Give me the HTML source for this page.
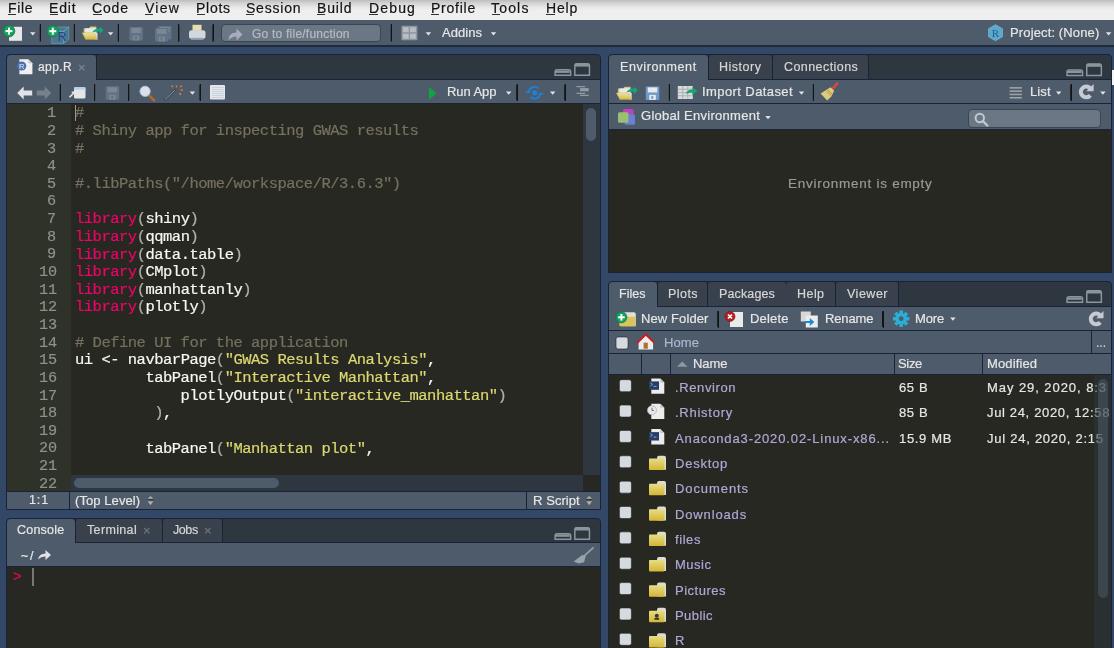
<!DOCTYPE html>
<html><head><meta charset="utf-8"><style>
html,body{margin:0;padding:0;}
body{-webkit-font-smoothing:antialiased;width:1114px;height:648px;overflow:hidden;position:relative;background:#324866;font-family:"Liberation Sans",sans-serif;}
.b{position:absolute;}
.t{position:absolute;white-space:pre;will-change:transform;-webkit-text-stroke:0.2px currentColor;}
.code{font-family:"Liberation Mono",monospace;font-size:15.5px;line-height:15.5px;letter-spacing:-0.5px;}
</style></head><body>
<div class="b" style="left:0px;top:0px;width:1114px;height:20px;background:linear-gradient(#bdbdbd 0px,#d2d2d2 3px,#e6e6e6 7px,#eeeeee 10px,#efefef 20px);"></div>
<div class="t" style="left:7.60px;top:0.75px;font-size:14px;line-height:14px;color:#141414;letter-spacing:0.661px;font-family:'Liberation Sans',sans-serif;">File</div>
<div class="b" style="left:8px;top:14px;width:8px;height:1px;background:#333;"></div>
<div class="t" style="left:49.30px;top:0.75px;font-size:14px;line-height:14px;color:#141414;letter-spacing:0.819px;font-family:'Liberation Sans',sans-serif;">Edit</div>
<div class="b" style="left:50px;top:14px;width:8px;height:1px;background:#333;"></div>
<div class="t" style="left:92.40px;top:0.75px;font-size:14px;line-height:14px;color:#141414;letter-spacing:0.833px;font-family:'Liberation Sans',sans-serif;">Code</div>
<div class="b" style="left:93px;top:14px;width:9px;height:1px;background:#333;"></div>
<div class="t" style="left:144.90px;top:0.75px;font-size:14px;line-height:14px;color:#141414;letter-spacing:1.277px;font-family:'Liberation Sans',sans-serif;">View</div>
<div class="b" style="left:145px;top:14px;width:8px;height:1px;background:#333;"></div>
<div class="t" style="left:196.10px;top:0.75px;font-size:14px;line-height:14px;color:#141414;letter-spacing:0.715px;font-family:'Liberation Sans',sans-serif;">Plots</div>
<div class="b" style="left:197px;top:14px;width:8px;height:1px;background:#333;"></div>
<div class="t" style="left:245.90px;top:0.75px;font-size:14px;line-height:14px;color:#141414;letter-spacing:0.785px;font-family:'Liberation Sans',sans-serif;">Session</div>
<div class="b" style="left:246px;top:14px;width:8px;height:1px;background:#333;"></div>
<div class="t" style="left:316.90px;top:0.75px;font-size:14px;line-height:14px;color:#141414;letter-spacing:0.854px;font-family:'Liberation Sans',sans-serif;">Build</div>
<div class="b" style="left:317px;top:14px;width:8px;height:1px;background:#333;"></div>
<div class="t" style="left:368.50px;top:0.75px;font-size:14px;line-height:14px;color:#141414;letter-spacing:1.150px;font-family:'Liberation Sans',sans-serif;">Debug</div>
<div class="b" style="left:369px;top:14px;width:9px;height:1px;background:#333;"></div>
<div class="t" style="left:430.90px;top:0.75px;font-size:14px;line-height:14px;color:#141414;letter-spacing:0.760px;font-family:'Liberation Sans',sans-serif;">Profile</div>
<div class="b" style="left:431px;top:14px;width:8px;height:1px;background:#333;"></div>
<div class="t" style="left:491.30px;top:0.75px;font-size:14px;line-height:14px;color:#141414;letter-spacing:1.184px;font-family:'Liberation Sans',sans-serif;">Tools</div>
<div class="b" style="left:492px;top:14px;width:8px;height:1px;background:#333;"></div>
<div class="t" style="left:545.90px;top:0.75px;font-size:14px;line-height:14px;color:#141414;letter-spacing:0.802px;font-family:'Liberation Sans',sans-serif;">Help</div>
<div class="b" style="left:546px;top:14px;width:9px;height:1px;background:#333;"></div>
<div class="b" style="left:0px;top:20px;width:1114px;height:25px;background:#4e5b6a;"></div>
<div class="b" style="left:0px;top:45px;width:1114px;height:2px;background:#1f2b3b;"></div>
<div class="b" style="left:40px;top:24px;width:1px;height:17px;background:#151515;"></div>
<div class="b" style="left:74px;top:24px;width:1px;height:17px;background:#151515;"></div>
<div class="b" style="left:118px;top:24px;width:1px;height:17px;background:#151515;"></div>
<div class="b" style="left:178px;top:24px;width:1px;height:17px;background:#151515;"></div>
<div class="b" style="left:213px;top:24px;width:1px;height:17px;background:#151515;"></div>
<div class="b" style="left:391px;top:24px;width:1px;height:17px;background:#151515;"></div>
<div class="b" style="left:221px;top:24px;width:160px;height:18px;background:#6b7785;border:1px solid #3a4552;border-radius:4px;box-sizing:border-box;"></div>
<div class="t" style="left:252.30px;top:28.24px;font-size:12px;line-height:12px;color:#b4bcc4;letter-spacing:0.227px;font-family:'Liberation Sans',sans-serif;">Go to file/function</div>
<div class="t" style="left:441.80px;top:26.00px;font-size:13px;line-height:13px;color:#e6e6e6;letter-spacing:0.075px;font-family:'Liberation Sans',sans-serif;">Addins</div>
<div class="t" style="left:1009.60px;top:26.00px;font-size:13px;line-height:13px;color:#e6e6e6;letter-spacing:0.132px;font-family:'Liberation Sans',sans-serif;">Project: (None)</div>
<div class="b" style="left:6px;top:54px;width:595px;height:456px;background:#2e3640;border:1px solid #18233a;border-radius:4px 4px 0 0;box-sizing:border-box;"></div>
<div class="b" style="left:7px;top:55px;width:89px;height:25px;background:#4e5b6a;border-radius:4px 4px 0 0;"></div>
<div class="b" style="left:96px;top:55px;width:1px;height:25px;background:#18233a;"></div>
<div class="b" style="left:97px;top:79px;width:503px;height:1px;background:#18233a;"></div>
<div class="t" style="left:38.30px;top:61.04px;font-size:12px;line-height:12px;color:#e8e8e8;letter-spacing:0.396px;font-family:'Liberation Sans',sans-serif;">app.R</div>
<div class="t" style="left:77.60px;top:60.50px;font-size:13px;line-height:13px;color:#7d8791;letter-spacing:0.000px;font-family:'Liberation Sans',sans-serif;">×</div>
<div class="b" style="left:7px;top:80px;width:593px;height:23px;background:#4e5b6a;"></div>
<div class="b" style="left:7px;top:103px;width:593px;height:1px;background:#18233a;"></div>
<div class="b" style="left:60px;top:84px;width:1px;height:17px;background:#151515;"></div>
<div class="b" style="left:94px;top:84px;width:1px;height:17px;background:#151515;"></div>
<div class="b" style="left:128px;top:84px;width:1px;height:17px;background:#151515;"></div>
<div class="b" style="left:200px;top:84px;width:1px;height:17px;background:#151515;"></div>
<div class="b" style="left:517px;top:84px;width:1px;height:17px;background:#151515;"></div>
<div class="b" style="left:565px;top:84px;width:1px;height:17px;background:#151515;"></div>
<div class="t" style="left:446.80px;top:85.20px;font-size:13px;line-height:13px;color:#e6e6e6;letter-spacing:-0.067px;font-family:'Liberation Sans',sans-serif;">Run App</div>
<div class="b" style="left:7px;top:104px;width:64px;height:387px;background:#2e3229;"></div>
<div class="b" style="left:71px;top:104px;width:512px;height:371px;background:#272822;"></div>
<div class="b" style="left:583px;top:104px;width:17px;height:371px;background:#2e3640;"></div>
<div class="b" style="left:586px;top:108px;width:10px;height:33px;background:#4e5b6a;border-radius:5px;"></div>
<div class="b" style="left:71px;top:475px;width:512px;height:16px;background:#2e3640;"></div>
<div class="b" style="left:74px;top:478px;width:205px;height:10px;background:#4e5b6a;border-radius:5px;"></div>
<div class="b" style="left:583px;top:475px;width:17px;height:16px;background:#272822;"></div>
<div class="b" style="left:7px;top:491px;width:593px;height:18px;background:#4e5b6a;"></div>
<div class="b" style="left:7px;top:491px;width:593px;height:1px;background:#18233a;"></div>
<div class="b" style="left:69px;top:491px;width:1px;height:18px;background:#18233a;"></div>
<div class="b" style="left:526px;top:491px;width:1px;height:18px;background:#18233a;"></div>
<div class="t" style="left:28.50px;top:494.42px;font-size:12.5px;line-height:12.5px;color:#e6e6e6;letter-spacing:0.875px;font-family:'Liberation Sans',sans-serif;">1:1</div>
<div class="t" style="left:75.00px;top:494.00px;font-size:13px;line-height:13px;color:#e6e6e6;letter-spacing:0.082px;font-family:'Liberation Sans',sans-serif;">(Top Level)</div>
<div class="t" style="left:533.00px;top:494.00px;font-size:13px;line-height:13px;color:#e6e6e6;letter-spacing:0.071px;font-family:'Liberation Sans',sans-serif;">R Script</div>
<div class="t" style="left:47.40px;top:106.26px;font-size:15.2px;line-height:15.2px;color:#8f908a;letter-spacing:0.000px;font-family:'Liberation Mono',monospace;">1</div>
<div class="t code" style="left:75.3px;top:106.43px;"><span style="color:#75715e">#</span></div>
<div class="t" style="left:47.40px;top:123.90px;font-size:15.2px;line-height:15.2px;color:#8f908a;letter-spacing:0.000px;font-family:'Liberation Mono',monospace;">2</div>
<div class="t code" style="left:75.3px;top:124.07px;"><span style="color:#75715e"># Shiny app for inspecting GWAS results</span></div>
<div class="t" style="left:47.40px;top:141.54px;font-size:15.2px;line-height:15.2px;color:#8f908a;letter-spacing:0.000px;font-family:'Liberation Mono',monospace;">3</div>
<div class="t code" style="left:75.3px;top:141.71px;"><span style="color:#75715e">#</span></div>
<div class="t" style="left:47.40px;top:159.18px;font-size:15.2px;line-height:15.2px;color:#8f908a;letter-spacing:0.000px;font-family:'Liberation Mono',monospace;">4</div>
<div class="t" style="left:47.40px;top:176.82px;font-size:15.2px;line-height:15.2px;color:#8f908a;letter-spacing:0.000px;font-family:'Liberation Mono',monospace;">5</div>
<div class="t code" style="left:75.3px;top:176.99px;"><span style="color:#75715e">#.libPaths("/home/workspace/R/3.6.3")</span></div>
<div class="t" style="left:47.40px;top:194.46px;font-size:15.2px;line-height:15.2px;color:#8f908a;letter-spacing:0.000px;font-family:'Liberation Mono',monospace;">6</div>
<div class="t" style="left:47.40px;top:212.10px;font-size:15.2px;line-height:15.2px;color:#8f908a;letter-spacing:0.000px;font-family:'Liberation Mono',monospace;">7</div>
<div class="t code" style="left:75.3px;top:212.27px;"><span style="color:#ee0468">library</span><span style="color:#b0b0a8">(</span><span style="color:#f8f8f2">shiny</span><span style="color:#b0b0a8">)</span></div>
<div class="t" style="left:47.40px;top:229.74px;font-size:15.2px;line-height:15.2px;color:#8f908a;letter-spacing:0.000px;font-family:'Liberation Mono',monospace;">8</div>
<div class="t code" style="left:75.3px;top:229.91px;"><span style="color:#ee0468">library</span><span style="color:#b0b0a8">(</span><span style="color:#f8f8f2">qqman</span><span style="color:#b0b0a8">)</span></div>
<div class="t" style="left:47.40px;top:247.38px;font-size:15.2px;line-height:15.2px;color:#8f908a;letter-spacing:0.000px;font-family:'Liberation Mono',monospace;">9</div>
<div class="t code" style="left:75.3px;top:247.55px;"><span style="color:#ee0468">library</span><span style="color:#b0b0a8">(</span><span style="color:#f8f8f2">data.table</span><span style="color:#b0b0a8">)</span></div>
<div class="t" style="left:38.60px;top:265.02px;font-size:15.2px;line-height:15.2px;color:#8f908a;letter-spacing:0.000px;font-family:'Liberation Mono',monospace;">10</div>
<div class="t code" style="left:75.3px;top:265.19px;"><span style="color:#ee0468">library</span><span style="color:#b0b0a8">(</span><span style="color:#f8f8f2">CMplot</span><span style="color:#b0b0a8">)</span></div>
<div class="t" style="left:38.60px;top:282.66px;font-size:15.2px;line-height:15.2px;color:#8f908a;letter-spacing:0.000px;font-family:'Liberation Mono',monospace;">11</div>
<div class="t code" style="left:75.3px;top:282.83px;"><span style="color:#ee0468">library</span><span style="color:#b0b0a8">(</span><span style="color:#f8f8f2">manhattanly</span><span style="color:#b0b0a8">)</span></div>
<div class="t" style="left:38.60px;top:300.30px;font-size:15.2px;line-height:15.2px;color:#8f908a;letter-spacing:0.000px;font-family:'Liberation Mono',monospace;">12</div>
<div class="t code" style="left:75.3px;top:300.47px;"><span style="color:#ee0468">library</span><span style="color:#b0b0a8">(</span><span style="color:#f8f8f2">plotly</span><span style="color:#b0b0a8">)</span></div>
<div class="t" style="left:38.60px;top:317.94px;font-size:15.2px;line-height:15.2px;color:#8f908a;letter-spacing:0.000px;font-family:'Liberation Mono',monospace;">13</div>
<div class="t" style="left:38.60px;top:335.58px;font-size:15.2px;line-height:15.2px;color:#8f908a;letter-spacing:0.000px;font-family:'Liberation Mono',monospace;">14</div>
<div class="t code" style="left:75.3px;top:335.75px;"><span style="color:#75715e"># Define UI for the application</span></div>
<div class="t" style="left:38.60px;top:353.22px;font-size:15.2px;line-height:15.2px;color:#8f908a;letter-spacing:0.000px;font-family:'Liberation Mono',monospace;">15</div>
<div class="t code" style="left:75.3px;top:353.39px;"><span style="color:#f8f8f2">ui </span><span style="color:#f8f8f2">&lt;-</span><span style="color:#f8f8f2"> navbarPage</span><span style="color:#b0b0a8">(</span><span style="color:#dcd870">"GWAS Results Analysis"</span><span style="color:#f8f8f2">,</span></div>
<div class="t" style="left:38.60px;top:370.86px;font-size:15.2px;line-height:15.2px;color:#8f908a;letter-spacing:0.000px;font-family:'Liberation Mono',monospace;">16</div>
<div class="t code" style="left:75.3px;top:371.03px;"><span style="color:#f8f8f2">        tabPanel</span><span style="color:#b0b0a8">(</span><span style="color:#dcd870">"Interactive Manhattan"</span><span style="color:#f8f8f2">,</span></div>
<div class="t" style="left:38.60px;top:388.50px;font-size:15.2px;line-height:15.2px;color:#8f908a;letter-spacing:0.000px;font-family:'Liberation Mono',monospace;">17</div>
<div class="t code" style="left:75.3px;top:388.67px;"><span style="color:#f8f8f2">            plotlyOutput</span><span style="color:#b0b0a8">(</span><span style="color:#dcd870">"interactive_manhattan"</span><span style="color:#b0b0a8">)</span></div>
<div class="t" style="left:38.60px;top:406.14px;font-size:15.2px;line-height:15.2px;color:#8f908a;letter-spacing:0.000px;font-family:'Liberation Mono',monospace;">18</div>
<div class="t code" style="left:75.3px;top:406.31px;"><span style="color:#f8f8f2">         </span><span style="color:#b0b0a8">)</span><span style="color:#f8f8f2">,</span></div>
<div class="t" style="left:38.60px;top:423.78px;font-size:15.2px;line-height:15.2px;color:#8f908a;letter-spacing:0.000px;font-family:'Liberation Mono',monospace;">19</div>
<div class="t" style="left:38.60px;top:441.42px;font-size:15.2px;line-height:15.2px;color:#8f908a;letter-spacing:0.000px;font-family:'Liberation Mono',monospace;">20</div>
<div class="t code" style="left:75.3px;top:441.59px;"><span style="color:#f8f8f2">        tabPanel</span><span style="color:#b0b0a8">(</span><span style="color:#dcd870">"Manhattan plot"</span><span style="color:#f8f8f2">,</span></div>
<div class="t" style="left:38.60px;top:459.06px;font-size:15.2px;line-height:15.2px;color:#8f908a;letter-spacing:0.000px;font-family:'Liberation Mono',monospace;">21</div>
<div class="t" style="left:38.60px;top:476.70px;font-size:15.2px;line-height:15.2px;color:#8f908a;letter-spacing:0.000px;font-family:'Liberation Mono',monospace;">22</div>
<div class="b" style="left:75px;top:105px;width:1px;height:16px;background:#9a9a90;"></div>
<div class="b" style="left:6px;top:518px;width:595px;height:130px;background:#2e3640;border:1px solid #18233a;border-radius:4px 4px 0 0;box-sizing:border-box;"></div>
<div class="b" style="left:7px;top:519px;width:68px;height:24px;background:#4e5b6a;border-radius:4px 4px 0 0;"></div>
<div class="b" style="left:75px;top:519px;width:1px;height:24px;background:#18233a;"></div>
<div class="b" style="left:76px;top:519px;width:86px;height:24px;background:#38414c;border-radius:4px 4px 0 0;"></div>
<div class="b" style="left:162px;top:519px;width:1px;height:24px;background:#18233a;"></div>
<div class="b" style="left:163px;top:519px;width:59px;height:24px;background:#38414c;border-radius:4px 4px 0 0;"></div>
<div class="b" style="left:222px;top:519px;width:1px;height:24px;background:#18233a;"></div>
<div class="b" style="left:76px;top:542px;width:524px;height:1px;background:#18233a;"></div>
<div class="t" style="left:17.00px;top:524.22px;font-size:12.5px;line-height:12.5px;color:#e6e6e6;letter-spacing:0.206px;font-family:'Liberation Sans',sans-serif;">Console</div>
<div class="t" style="left:86.70px;top:524.22px;font-size:12.5px;line-height:12.5px;color:#d6d6d6;letter-spacing:0.346px;font-family:'Liberation Sans',sans-serif;">Terminal</div>
<div class="t" style="left:143.20px;top:523.50px;font-size:13px;line-height:13px;color:#6f7882;letter-spacing:0.000px;font-family:'Liberation Sans',sans-serif;">×</div>
<div class="t" style="left:172.60px;top:524.22px;font-size:12.5px;line-height:12.5px;color:#d6d6d6;letter-spacing:-0.426px;font-family:'Liberation Sans',sans-serif;">Jobs</div>
<div class="t" style="left:203.80px;top:523.50px;font-size:13px;line-height:13px;color:#6f7882;letter-spacing:0.000px;font-family:'Liberation Sans',sans-serif;">×</div>
<div class="b" style="left:7px;top:543px;width:593px;height:23px;background:#4e5b6a;"></div>
<div class="b" style="left:7px;top:566px;width:593px;height:1px;background:#18233a;"></div>
<div class="t" style="left:20.80px;top:550.22px;font-size:12.5px;line-height:12.5px;color:#e6e6e6;letter-spacing:1.613px;font-family:'Liberation Sans',sans-serif;">~/</div>
<div class="b" style="left:7px;top:567px;width:593px;height:81px;background:#272822;"></div>
<div class="t" style="left:12.80px;top:569.76px;font-size:14.67px;line-height:14.67px;color:#ee0468;letter-spacing:0.000px;font-family:'Liberation Mono',monospace;">&gt;</div>
<div class="b" style="left:32px;top:568px;width:2px;height:18px;background:#77786f;"></div>
<div class="b" style="left:608px;top:54px;width:504px;height:219px;background:#2e3640;border:1px solid #18233a;border-radius:4px 4px 0 0;box-sizing:border-box;"></div>
<div class="b" style="left:609px;top:55px;width:99px;height:25px;background:#4e5b6a;border-radius:4px 4px 0 0;"></div>
<div class="b" style="left:708px;top:55px;width:1px;height:25px;background:#18233a;"></div>
<div class="b" style="left:709px;top:55px;width:63px;height:25px;background:#38414c;border-radius:4px 4px 0 0;"></div>
<div class="b" style="left:772px;top:55px;width:1px;height:25px;background:#18233a;"></div>
<div class="b" style="left:773px;top:55px;width:95px;height:25px;background:#38414c;border-radius:4px 4px 0 0;"></div>
<div class="b" style="left:868px;top:55px;width:1px;height:25px;background:#18233a;"></div>
<div class="b" style="left:709px;top:79px;width:402px;height:1px;background:#18233a;"></div>
<div class="t" style="left:620.10px;top:60.92px;font-size:12.5px;line-height:12.5px;color:#e6e6e6;letter-spacing:0.594px;font-family:'Liberation Sans',sans-serif;">Environment</div>
<div class="t" style="left:718.50px;top:60.92px;font-size:12.5px;line-height:12.5px;color:#d6d6d6;letter-spacing:0.516px;font-family:'Liberation Sans',sans-serif;">History</div>
<div class="t" style="left:783.70px;top:60.92px;font-size:12.5px;line-height:12.5px;color:#d6d6d6;letter-spacing:0.429px;font-family:'Liberation Sans',sans-serif;">Connections</div>
<div class="b" style="left:609px;top:80px;width:502px;height:23px;background:#4e5b6a;"></div>
<div class="b" style="left:609px;top:103px;width:502px;height:1px;background:#18233a;"></div>
<div class="b" style="left:669px;top:84px;width:1px;height:17px;background:#151515;"></div>
<div class="b" style="left:813px;top:84px;width:1px;height:17px;background:#151515;"></div>
<div class="b" style="left:1071px;top:84px;width:1px;height:17px;background:#151515;"></div>
<div class="t" style="left:702.00px;top:85.00px;font-size:13px;line-height:13px;color:#e6e6e6;letter-spacing:0.411px;font-family:'Liberation Sans',sans-serif;">Import Dataset</div>
<div class="t" style="left:1029.50px;top:85.40px;font-size:13px;line-height:13px;color:#e6e6e6;letter-spacing:0.093px;font-family:'Liberation Sans',sans-serif;">List</div>
<div class="b" style="left:609px;top:104px;width:502px;height:25px;background:#4e5b6a;"></div>
<div class="b" style="left:609px;top:129px;width:502px;height:1px;background:#18233a;"></div>
<div class="t" style="left:641.00px;top:109.10px;font-size:13px;line-height:13px;color:#e6e6e6;letter-spacing:0.269px;font-family:'Liberation Sans',sans-serif;">Global Environment</div>
<div class="b" style="left:968px;top:109px;width:133px;height:19px;background:#6b7785;border:1px solid #3a4552;border-radius:4px;box-sizing:border-box;"></div>
<div class="b" style="left:609px;top:130px;width:502px;height:142px;background:#272822;"></div>
<div class="t" style="left:787.80px;top:177.17px;font-size:13.5px;line-height:13.5px;color:#9a9a94;letter-spacing:0.740px;font-family:'Liberation Sans',sans-serif;">Environment is empty</div>
<div class="b" style="left:1112px;top:70px;width:2px;height:15px;background:#f4f4f4;"></div>
<div class="b" style="left:608px;top:281px;width:504px;height:367px;background:#2e3640;border:1px solid #18233a;border-radius:4px 4px 0 0;box-sizing:border-box;"></div>
<div class="b" style="left:609px;top:282px;width:48px;height:25px;background:#4e5b6a;border-radius:4px 4px 0 0;"></div>
<div class="b" style="left:657px;top:282px;width:1px;height:25px;background:#18233a;"></div>
<div class="b" style="left:658px;top:282px;width:49px;height:25px;background:#38414c;border-radius:4px 4px 0 0;"></div>
<div class="b" style="left:707px;top:282px;width:1px;height:25px;background:#18233a;"></div>
<div class="b" style="left:708px;top:282px;width:78px;height:25px;background:#38414c;border-radius:4px 4px 0 0;"></div>
<div class="b" style="left:786px;top:282px;width:1px;height:25px;background:#18233a;"></div>
<div class="b" style="left:786px;top:282px;width:49px;height:25px;background:#38414c;border-radius:4px 4px 0 0;"></div>
<div class="b" style="left:835px;top:282px;width:1px;height:25px;background:#18233a;"></div>
<div class="b" style="left:836px;top:282px;width:62px;height:25px;background:#38414c;border-radius:4px 4px 0 0;"></div>
<div class="b" style="left:898px;top:282px;width:1px;height:25px;background:#18233a;"></div>
<div class="b" style="left:658px;top:306px;width:453px;height:1px;background:#18233a;"></div>
<div class="t" style="left:619.40px;top:287.72px;font-size:12.5px;line-height:12.5px;color:#e6e6e6;letter-spacing:0.042px;font-family:'Liberation Sans',sans-serif;">Files</div>
<div class="t" style="left:668.00px;top:287.72px;font-size:12.5px;line-height:12.5px;color:#d6d6d6;letter-spacing:0.442px;font-family:'Liberation Sans',sans-serif;">Plots</div>
<div class="t" style="left:719.00px;top:287.72px;font-size:12.5px;line-height:12.5px;color:#d6d6d6;letter-spacing:0.138px;font-family:'Liberation Sans',sans-serif;">Packages</div>
<div class="t" style="left:797.00px;top:287.72px;font-size:12.5px;line-height:12.5px;color:#d6d6d6;letter-spacing:0.448px;font-family:'Liberation Sans',sans-serif;">Help</div>
<div class="t" style="left:846.50px;top:287.72px;font-size:12.5px;line-height:12.5px;color:#d6d6d6;letter-spacing:0.503px;font-family:'Liberation Sans',sans-serif;">Viewer</div>
<div class="b" style="left:609px;top:307px;width:502px;height:23px;background:#4e5b6a;"></div>
<div class="b" style="left:609px;top:330px;width:502px;height:1px;background:#18233a;"></div>
<div class="b" style="left:718px;top:311px;width:1px;height:17px;background:#151515;"></div>
<div class="b" style="left:883px;top:311px;width:1px;height:17px;background:#151515;"></div>
<div class="t" style="left:641.00px;top:311.90px;font-size:13px;line-height:13px;color:#e6e6e6;letter-spacing:0.104px;font-family:'Liberation Sans',sans-serif;">New Folder</div>
<div class="t" style="left:750.30px;top:311.90px;font-size:13px;line-height:13px;color:#e6e6e6;letter-spacing:0.187px;font-family:'Liberation Sans',sans-serif;">Delete</div>
<div class="t" style="left:824.50px;top:311.90px;font-size:13px;line-height:13px;color:#e6e6e6;letter-spacing:-0.156px;font-family:'Liberation Sans',sans-serif;">Rename</div>
<div class="t" style="left:915.40px;top:311.90px;font-size:13px;line-height:13px;color:#e6e6e6;letter-spacing:-0.154px;font-family:'Liberation Sans',sans-serif;">More</div>
<div class="b" style="left:609px;top:331px;width:502px;height:23px;background:#4e5b6a;"></div>
<div class="b" style="left:1091px;top:331px;width:1px;height:23px;background:#18233a;"></div>
<div class="b" style="left:609px;top:353px;width:502px;height:1px;background:#18233a;"></div>
<div class="t" style="left:664.00px;top:335.80px;font-size:13px;line-height:13px;color:#a9b9d1;letter-spacing:0.106px;font-family:'Liberation Sans',sans-serif;">Home</div>
<div class="t" style="left:1096.00px;top:336.84px;font-size:12px;line-height:12px;color:#d0d0d0;letter-spacing:0.000px;font-family:'Liberation Sans',sans-serif;">...</div>
<div class="b" style="left:609px;top:354px;width:502px;height:21px;background:#4e5b6a;"></div>
<div class="b" style="left:609px;top:374px;width:502px;height:1px;background:#18233a;"></div>
<div class="b" style="left:641px;top:354px;width:1px;height:20px;background:#18233a;"></div>
<div class="b" style="left:670px;top:354px;width:1px;height:20px;background:#18233a;"></div>
<div class="b" style="left:894px;top:354px;width:1px;height:20px;background:#18233a;"></div>
<div class="b" style="left:982px;top:354px;width:1px;height:20px;background:#18233a;"></div>
<div class="t" style="left:692.70px;top:356.80px;font-size:13px;line-height:13px;color:#e6e6e6;letter-spacing:-0.044px;font-family:'Liberation Sans',sans-serif;">Name</div>
<div class="t" style="left:898.30px;top:356.80px;font-size:13px;line-height:13px;color:#e6e6e6;letter-spacing:-0.322px;font-family:'Liberation Sans',sans-serif;">Size</div>
<div class="t" style="left:986.50px;top:356.80px;font-size:13px;line-height:13px;color:#e6e6e6;letter-spacing:0.133px;font-family:'Liberation Sans',sans-serif;">Modified</div>
<div class="b" style="left:609px;top:375px;width:502px;height:273px;background:#272822;"></div>
<div class="t" style="left:675.40px;top:380.80px;font-size:13px;line-height:13px;color:#b3a6d6;letter-spacing:0.607px;font-family:'Liberation Sans',sans-serif;">.Renviron</div>
<div class="t" style="left:899.20px;top:380.80px;font-size:13px;line-height:13px;color:#e6e6e6;letter-spacing:0.615px;font-family:'Liberation Sans',sans-serif;">65 B</div>
<div class="t" style="left:986.50px;top:380.80px;font-size:13px;line-height:13px;color:#e6e6e6;letter-spacing:0.938px;font-family:'Liberation Sans',sans-serif;">May 29, 2020, 8:3</div>
<div class="t" style="left:675.40px;top:406.16px;font-size:13px;line-height:13px;color:#b3a6d6;letter-spacing:0.746px;font-family:'Liberation Sans',sans-serif;">.Rhistory</div>
<div class="t" style="left:899.20px;top:406.16px;font-size:13px;line-height:13px;color:#e6e6e6;letter-spacing:0.615px;font-family:'Liberation Sans',sans-serif;">85 B</div>
<div class="t" style="left:986.50px;top:406.16px;font-size:13px;line-height:13px;color:#e6e6e6;letter-spacing:0.654px;font-family:'Liberation Sans',sans-serif;">Jul 24, 2020, 12:58</div>
<div class="t" style="left:675.40px;top:431.52px;font-size:13px;line-height:13px;color:#b3a6d6;letter-spacing:0.879px;font-family:'Liberation Sans',sans-serif;">Anaconda3-2020.02-Linux-x86...</div>
<div class="t" style="left:899.20px;top:431.52px;font-size:13px;line-height:13px;color:#e6e6e6;letter-spacing:0.670px;font-family:'Liberation Sans',sans-serif;">15.9 MB</div>
<div class="t" style="left:986.50px;top:431.52px;font-size:13px;line-height:13px;color:#e6e6e6;letter-spacing:0.747px;font-family:'Liberation Sans',sans-serif;">Jul 24, 2020, 2:15</div>
<div class="t" style="left:675.40px;top:456.88px;font-size:13px;line-height:13px;color:#b3a6d6;letter-spacing:0.759px;font-family:'Liberation Sans',sans-serif;">Desktop</div>
<div class="t" style="left:675.40px;top:482.24px;font-size:13px;line-height:13px;color:#b3a6d6;letter-spacing:0.917px;font-family:'Liberation Sans',sans-serif;">Documents</div>
<div class="t" style="left:675.40px;top:507.60px;font-size:13px;line-height:13px;color:#b3a6d6;letter-spacing:0.854px;font-family:'Liberation Sans',sans-serif;">Downloads</div>
<div class="t" style="left:675.40px;top:532.96px;font-size:13px;line-height:13px;color:#b3a6d6;letter-spacing:0.576px;font-family:'Liberation Sans',sans-serif;">files</div>
<div class="t" style="left:675.40px;top:558.32px;font-size:13px;line-height:13px;color:#b3a6d6;letter-spacing:0.511px;font-family:'Liberation Sans',sans-serif;">Music</div>
<div class="t" style="left:675.40px;top:583.68px;font-size:13px;line-height:13px;color:#b3a6d6;letter-spacing:0.505px;font-family:'Liberation Sans',sans-serif;">Pictures</div>
<div class="t" style="left:675.40px;top:609.04px;font-size:13px;line-height:13px;color:#b3a6d6;letter-spacing:0.432px;font-family:'Liberation Sans',sans-serif;">Public</div>
<div class="t" style="left:675.40px;top:634.40px;font-size:13px;line-height:13px;color:#b3a6d6;letter-spacing:-1.388px;font-family:'Liberation Sans',sans-serif;">R</div>
<div class="b" style="left:1094px;top:375px;width:17px;height:273px;background:rgba(46,54,64,0.55);"></div>
<div class="b" style="left:1097.5px;top:379px;width:10.5px;height:219px;background:rgba(78,91,106,0.5);border-radius:5px;"></div>
<svg class="b" style="left:0;top:0;pointer-events:none" width="1114" height="648" viewBox="0 0 1114 648"><defs><linearGradient id="fg" x1="0" y1="0" x2="0" y2="1"><stop offset="0" stop-color="#e6dc88"/><stop offset="1" stop-color="#d6b632"/></linearGradient><linearGradient id="ofg" x1="0" y1="0" x2="0" y2="1"><stop offset="0" stop-color="#ebe6a6"/><stop offset="1" stop-color="#d4b844"/></linearGradient></defs><rect x="9" y="26.8" width="13" height="14" fill="#e8e8e8"/><circle cx="9" cy="31.1" r="5.8" fill="#16a05e" stroke="#0d7c48" stroke-width="0.8"/><rect x="5.52" y="30.1" width="6.96" height="2" fill="#fff"/><rect x="8" y="27.62" width="2" height="6.96" fill="#fff"/><polygon points="30.0,32.3 35.5,32.3 32.75,35.5" fill="#dfe3e8"/><rect x="39.699999999999996" y="24.4" width="1.2" height="17.300000000000004" rx="0.6" fill="#141414"/><g transform="translate(51.8 27)"><polygon points="0,4.3 5,0 17,0 12,4.3" fill="rgba(80,165,195,0.38)" stroke="rgba(95,185,215,0.75)" stroke-width="0.7"/><polygon points="12,4.3 17,0 17,12 12,16.3" fill="rgba(70,150,180,0.45)" stroke="rgba(95,185,215,0.75)" stroke-width="0.7"/><rect x="0" y="4.3" width="12" height="12" fill="rgba(80,165,195,0.38)" stroke="rgba(95,185,215,0.75)" stroke-width="0.7"/><text x="6" y="13.5" font-family="Liberation Sans" font-size="12" fill="#27458f">R</text></g><circle cx="52.8" cy="31.2" r="5.8" fill="#16a05e" stroke="#0d7c48" stroke-width="0.8"/><rect x="49.32" y="30.2" width="6.96" height="2" fill="#fff"/><rect x="51.8" y="27.72" width="2" height="6.96" fill="#fff"/><rect x="73.80000000000001" y="24.4" width="1.2" height="17.300000000000004" rx="0.6" fill="#141414"/><g transform="translate(82.2 25.8)"><polygon points="1.7,2.8 7,2.8 8,1 14,1 14.5,6.9 1.7,6.9" fill="#d9d2a2" stroke="#bfae5c" stroke-width="0.5"/><rect x="3" y="2.4" width="10.5" height="5" fill="#e8e8e8"/><polygon points="11.6,6.9 15.3,6.9 15.3,13.6 13,13.6" fill="#dedede"/><polygon points="0,6.9 11.6,6.9 15.3,13.6 3.4,13.6" fill="url(#ofg)" stroke="#c8ae40" stroke-width="0.4"/><path d="M10.2 6.2 Q12 2.6 17.6 2.6 V0.8 L21.4 4.1 L17.6 7.9 V5.6 Q13 5.6 10.2 6.2 Z" fill="#12a87a"/></g><polygon points="107.85,32.3 113.35,32.3 110.6,35.5" fill="#dfe3e8"/><rect x="117.80000000000001" y="24.4" width="1.2" height="17.300000000000004" rx="0.6" fill="#141414"/><rect x="129.4" y="27" width="13.5" height="13.5" rx="1" fill="#5f7389"/><rect x="131.4" y="28" width="9.5" height="5" fill="#7d8791"/><rect x="132.9" y="35.5" width="6.5" height="5" fill="#7d8791"/><rect x="134.9" y="36.5" width="2" height="3" fill="#5f7389"/><rect x="158" y="26" width="13.5" height="13.5" rx="1" fill="#5f7389"/><rect x="160" y="27" width="9.5" height="5" fill="#7d8791"/><rect x="161.5" y="34.5" width="6.5" height="5" fill="#7d8791"/><rect x="163.5" y="35.5" width="2" height="3" fill="#5f7389"/><rect x="155" y="28" width="13.5" height="13.5" rx="1" fill="#5f7389"/><rect x="157" y="29" width="9.5" height="5" fill="#7d8791"/><rect x="158.5" y="36.5" width="6.5" height="5" fill="#7d8791"/><rect x="160.5" y="37.5" width="2" height="3" fill="#5f7389"/><rect x="178.20000000000002" y="24.4" width="1.2" height="17.300000000000004" rx="0.6" fill="#141414"/><rect x="192.5" y="24.8" width="9" height="6" fill="#e6ddb0"/><rect x="189" y="30.3" width="16.5" height="8.5" rx="2.5" fill="#d3d7de"/><rect x="191" y="37.8" width="12.5" height="2" fill="#9aa1ad"/><rect x="212.4" y="24.4" width="1.2" height="17.300000000000004" rx="0.6" fill="#141414"/><path d="M228.5 40.5 q0 -8 8 -8 v-4 l6 6 l-6 6 v-4 q-5 0 -8 4z" fill="#a9abc2"/><rect x="390.7" y="24.4" width="1.2" height="17.300000000000004" rx="0.6" fill="#141414"/><rect x="401.4" y="25.7" width="16" height="14.5" fill="#8d959e" rx="1"/><rect x="402.9" y="27.2" width="5.8" height="5" fill="#b7bdc4"/><rect x="402.9" y="33.7" width="5.8" height="5" fill="#b7bdc4"/><rect x="410.09999999999997" y="27.2" width="5.8" height="5" fill="#b7bdc4"/><rect x="410.09999999999997" y="33.7" width="5.8" height="5" fill="#b7bdc4"/><polygon points="425.65,32.3 431.15,32.3 428.4,35.5" fill="#dfe3e8"/><polygon points="490.75,32.3 496.25,32.3 493.5,35.5" fill="#dfe3e8"/><polygon points="1002.43,36.70 995.50,40.70 988.57,36.70 988.57,28.70 995.50,24.70 1002.43,28.70" fill="#5aa9cd" stroke="#86c6e0" stroke-width="0.6"/><text x="991.8" y="37" font-family="Liberation Serif" font-size="11" fill="#2a5a9a">R</text><polygon points="1105.85,32.3 1111.35,32.3 1108.6,35.5" fill="#dfe3e8"/><path d="M19.4 59.2 h9 l4 4 v11 h-13z" fill="#f0f0f0"/><path d="M28.4 59.2 v4 h4z" fill="#c8c8c8"/><circle cx="21.7" cy="66.0" r="4.6" fill="#4b6fb0"/><text x="19.099999999999998" y="69.2" font-family="Liberation Sans" font-size="7.5" fill="#e8eef8">R</text><path d="M555.15 75.3 v-3.5 q0 -2 2 -2 h11.5 q2 0 2 2 v3.5z" fill="none" stroke="#8a959c" stroke-width="1.5"/><rect x="555.15" y="70.6" width="14.5" height="2.3" fill="#8a959c"/><path d="M574.85 75.3 v-9.5 q0 -2 2 -2 h10.6 q2 0 2 2 v9.5z" fill="none" stroke="#8a959c" stroke-width="1.5"/><rect x="574.85" y="63.6" width="14.1" height="3" fill="#8a959c"/><path d="M17.2 93.1 l6.5 -6.5 v4 h8.5 v5 h-8.5 v4z" fill="#dfe2e6"/><path d="M51.300000000000004 93.1 l-6.5 -6.5 v4 h-8.1 v5 h8.1 v4z" fill="#76818c"/><rect x="59.699999999999996" y="84.5" width="1.2" height="16.099999999999994" rx="0.6" fill="#141414"/><rect x="74.0" y="87.2" width="11.5" height="11.3" rx="1.5" fill="#e4e6e8"/><rect x="74.0" y="87.2" width="11.5" height="2.5" fill="#b8d0e8"/><path d="M69.5 97.2 l5 -5 M71.7 92.2 h3 v3" stroke="#e4e6e8" stroke-width="1.6" fill="none"/><rect x="94.0" y="84.5" width="1.2" height="16.099999999999994" rx="0.6" fill="#141414"/><rect x="105.7" y="86.3" width="13.5" height="13.5" rx="1" fill="#5f7389"/><rect x="107.7" y="87.3" width="9.5" height="5" fill="#7d8791"/><rect x="109.2" y="94.8" width="6.5" height="5" fill="#7d8791"/><rect x="111.2" y="95.8" width="2" height="3" fill="#5f7389"/><rect x="128.1" y="84.5" width="1.2" height="16.099999999999994" rx="0.6" fill="#141414"/><line x1="148.6" y1="94.8" x2="154.1" y2="100.3" stroke="#b06a20" stroke-width="2.6" stroke-linecap="round"/><circle cx="145.1" cy="91.3" r="5.2" fill="#d8e2ee" stroke="#aab8c8" stroke-width="0.8"/><line x1="165.0" y1="99.5" x2="175.0" y2="90.0" stroke="#3a4450" stroke-width="2.2" stroke-linecap="round"/><line x1="165.0" y1="99.5" x2="175.0" y2="90.0" stroke="#8fb8d8" stroke-width="0.8"/><line x1="176.5" y1="85.5" x2="176.5" y2="87.5" stroke="#e0803a" stroke-width="1.3"/><line x1="180.0" y1="87.0" x2="182.0" y2="85.5" stroke="#e0803a" stroke-width="1.3"/><line x1="180.5" y1="90.0" x2="183.0" y2="90.0" stroke="#e0803a" stroke-width="1.3"/><line x1="179.5" y1="93.0" x2="181.0" y2="95.0" stroke="#e0803a" stroke-width="1.3"/><line x1="173.0" y1="87.0" x2="171.5" y2="85.5" stroke="#e0803a" stroke-width="1.3"/><polygon points="189.65,91.5 195.15,91.5 192.4,94.7" fill="#dfe3e8"/><rect x="199.4" y="84.5" width="1.2" height="16.099999999999994" rx="0.6" fill="#141414"/><rect x="210" y="85" width="15" height="14.5" rx="1" fill="#e4e6ea"/><line x1="212" y1="87.5" x2="224" y2="87.5" stroke="#b8c4d4" stroke-width="0.6"/><line x1="212" y1="89.5" x2="224" y2="89.5" stroke="#b8c4d4" stroke-width="0.6"/><line x1="212" y1="91.5" x2="224" y2="91.5" stroke="#b8c4d4" stroke-width="0.6"/><line x1="212" y1="93.5" x2="224" y2="93.5" stroke="#b8c4d4" stroke-width="0.6"/><line x1="212" y1="95.5" x2="224" y2="95.5" stroke="#b8c4d4" stroke-width="0.6"/><line x1="212" y1="97.5" x2="224" y2="97.5" stroke="#b8c4d4" stroke-width="0.6"/><polygon points="428.9,86.7 436.7,93.3 428.9,100.0" fill="#14a044"/><polygon points="505.95,91.5 511.45,91.5 508.7,94.7" fill="#dfe3e8"/><rect x="516.1999999999999" y="84.5" width="1.2" height="16.099999999999994" rx="0.6" fill="#141414"/><circle cx="534.6999999999999" cy="92.8" r="2.6" fill="#1d80d6"/><path d="M525.8 91.9 h3.2 a5.4 5.4 0 0 1 9.3 -3.3" fill="none" stroke="#1d80d6" stroke-width="2"/><path d="M543.1999999999999 93.7 h-3.2 a5.4 5.4 0 0 1 -9.3 3.3" fill="none" stroke="#1d80d6" stroke-width="2"/><polygon points="549.95,91.5 555.45,91.5 552.7,94.7" fill="#dfe3e8"/><rect x="564.1999999999999" y="84.5" width="1.2" height="16.099999999999994" rx="0.6" fill="#141414"/><rect x="576.5" y="86.2" width="8.7" height="1" fill="#a5abb1"/><rect x="580.0" y="88.10000000000001" width="8.7" height="3.2" fill="#a5abb1" opacity="0.8"/><rect x="576.5" y="92.8" width="8.7" height="1" fill="#a5abb1"/><rect x="580.0" y="94.8" width="8.7" height="1" fill="#a5abb1"/><polygon points="147.6,498.79999999999995 153.4,498.79999999999995 150.5,495.9" fill="#b3ada6"/><rect x="147.6" y="499.2" width="5.8" height="0.9" fill="#2a3038"/><polygon points="147.6,501.29999999999995 153.4,501.29999999999995 150.5,505.29999999999995" fill="#b3ada6"/><polygon points="586.3000000000001,498.79999999999995 592.1,498.79999999999995 589.2,495.9" fill="#b3ada6"/><rect x="586.3000000000001" y="499.2" width="5.8" height="0.9" fill="#2a3038"/><polygon points="586.3000000000001,501.29999999999995 592.1,501.29999999999995 589.2,505.29999999999995" fill="#b3ada6"/><path d="M555.15 539.2 v-3.5 q0 -2 2 -2 h11.5 q2 0 2 2 v3.5z" fill="none" stroke="#8a959c" stroke-width="1.5"/><rect x="555.15" y="534.5" width="14.5" height="2.3" fill="#8a959c"/><path d="M574.85 539.2 v-9.5 q0 -2 2 -2 h10.6 q2 0 2 2 v9.5z" fill="none" stroke="#8a959c" stroke-width="1.5"/><rect x="574.85" y="527.5" width="14.1" height="3" fill="#8a959c"/><path d="M38 559.5 q1 -6 7.5 -6 v-3.5 l5.5 5 l-5.5 5 v-3.5 q-4.5 0 -7.5 3z" fill="#e0e2e6"/><line x1="593.1" y1="547.8" x2="584.8" y2="555.4" stroke="#9aa2ac" stroke-width="1.6" stroke-linecap="round"/><polygon points="582.2,555.0 585.8,555.8 584.1,562.3 578.5,563.4 573.7,561.5" fill="#9aa2ac"/><path d="M1067.05 75.5 v-3.5 q0 -2 2 -2 h11.5 q2 0 2 2 v3.5z" fill="none" stroke="#8a959c" stroke-width="1.5"/><rect x="1067.05" y="70.8" width="14.5" height="2.3" fill="#8a959c"/><path d="M1086.75 75.5 v-9.5 q0 -2 2 -2 h10.6 q2 0 2 2 v9.5z" fill="none" stroke="#8a959c" stroke-width="1.5"/><rect x="1086.75" y="63.8" width="14.1" height="3" fill="#8a959c"/><g transform="translate(616.4 86)"><polygon points="1.7,2.8 7,2.8 8,1 14,1 14.5,6.9 1.7,6.9" fill="#d9d2a2" stroke="#bfae5c" stroke-width="0.5"/><rect x="3" y="2.4" width="10.5" height="5" fill="#e8e8e8"/><polygon points="11.6,6.9 15.3,6.9 15.3,13.6 13,13.6" fill="#dedede"/><polygon points="0,6.9 11.6,6.9 15.3,13.6 3.4,13.6" fill="url(#ofg)" stroke="#c8ae40" stroke-width="0.4"/><path d="M10.2 6.2 Q12 2.6 17.6 2.6 V0.8 L21.4 4.1 L17.6 7.9 V5.6 Q13 5.6 10.2 6.2 Z" fill="#12a87a"/></g><rect x="645.8" y="86.4" width="13.5" height="13.5" rx="1" fill="#6d9bd0"/><rect x="647.8" y="87.4" width="9.5" height="5" fill="#ebebeb"/><rect x="649.3" y="94.9" width="6.5" height="5" fill="#ebebeb"/><rect x="651.3" y="95.9" width="2" height="3" fill="#6d9bd0"/><rect x="668.8" y="84.5" width="1.2" height="16.099999999999994" rx="0.6" fill="#141414"/><rect x="677.8" y="86" width="15" height="13" fill="#d8dadc"/><line x1="677.8" y1="89.25" x2="692.8" y2="89.25" stroke="#9ea4aa" stroke-width="0.7"/><line x1="677.8" y1="92.5" x2="692.8" y2="92.5" stroke="#9ea4aa" stroke-width="0.7"/><line x1="677.8" y1="95.75" x2="692.8" y2="95.75" stroke="#9ea4aa" stroke-width="0.7"/><line x1="682.8" y1="86" x2="682.8" y2="99" stroke="#9ea4aa" stroke-width="0.7"/><line x1="687.8" y1="86" x2="687.8" y2="99" stroke="#9ea4aa" stroke-width="0.7"/><path d="M685.8 94 q1 -4.5 6.5 -4.5 v-2.5 l5 4 l-5 4 v-2.5 q-4 0 -6.5 1.5z" fill="#17a673"/><polygon points="798.75,91.5 804.25,91.5 801.5,94.7" fill="#dfe3e8"/><rect x="812.8" y="84.5" width="1.2" height="16.099999999999994" rx="0.6" fill="#141414"/><line x1="837.2" y1="83.5" x2="832.8" y2="88.6" stroke="#d84a40" stroke-width="2.6" stroke-linecap="round"/><polygon points="830.5,87.2 834.2,90.8 831.3,96.5 827.2,100.6 820.6,93.6" fill="#dccb7c"/><line x1="827.6" y1="89.8" x2="832.2" y2="94.4" stroke="#b48a34" stroke-width="1"/><line x1="826.6" y1="91.2" x2="831.0" y2="95.8" stroke="#b48a34" stroke-width="0.8"/><rect x="1009.6" y="87.1" width="12.3" height="1.5" fill="#9fa7a8"/><rect x="1009.6" y="90.39999999999999" width="12.3" height="1.5" fill="#9fa7a8"/><rect x="1009.6" y="93.69999999999999" width="12.3" height="1.5" fill="#9fa7a8"/><rect x="1009.6" y="97.0" width="12.3" height="1.5" fill="#9fa7a8"/><polygon points="1055.95,91.5 1061.45,91.5 1058.7,94.7" fill="#dfe3e8"/><rect x="1070.2" y="84.5" width="1.2" height="16.099999999999994" rx="0.6" fill="#141414"/><path d="M1090.30 95.34 A5.35 5.35 0 1 1 1090.42 88.61" fill="none" stroke="#c5cad3" stroke-width="4"/><polygon points="1086.2,91.2 1093.6,91.2 1093.6,84.0" fill="#c5cad3"/><polygon points="1100.15,91.5 1105.65,91.5 1102.9,94.7" fill="#dfe3e8"/><rect x="623" y="109" width="10.5" height="10.5" rx="1.5" fill="#c040c0"/><rect x="624.5" y="114.3" width="10.5" height="10.5" rx="1.5" fill="#6a80d0"/><rect x="618" y="112.3" width="10.5" height="10.5" rx="1.5" fill="#98c070"/><polygon points="765.25,116.0 770.75,116.0 768,119.2" fill="#dfe3e8"/><circle cx="979.8" cy="118.0" r="4.2" fill="none" stroke="#c2c8ce" stroke-width="2"/><line x1="982.8" y1="121.0" x2="987.3" y2="125.5" stroke="#c2c8ce" stroke-width="2.4" stroke-linecap="round"/><path d="M1067.05 302.2 v-3.5 q0 -2 2 -2 h11.5 q2 0 2 2 v3.5z" fill="none" stroke="#8a959c" stroke-width="1.5"/><rect x="1067.05" y="297.5" width="14.5" height="2.3" fill="#8a959c"/><path d="M1086.75 302.2 v-9.5 q0 -2 2 -2 h10.6 q2 0 2 2 v9.5z" fill="none" stroke="#8a959c" stroke-width="1.5"/><rect x="1086.75" y="290.5" width="14.1" height="3" fill="#8a959c"/><path d="M621.8 314.2 q0 -2 2 -2 h10 q2 0 2 2 v12 h-14z" fill="#e0e0d8"/><rect x="619.3" y="316.7" width="16" height="9.5" rx="1" fill="#d8c55c"/><circle cx="621.4" cy="317.3" r="5.5" fill="#16a05e" stroke="#0d7c48" stroke-width="0.8"/><rect x="618.1" y="316.3" width="6.6" height="2" fill="#fff"/><rect x="620.4" y="314.0" width="2" height="6.6" fill="#fff"/><rect x="717.1999999999999" y="311" width="1.2" height="16" rx="0.6" fill="#141414"/><rect x="730" y="312.0" width="13" height="15" fill="#eaeaea"/><circle cx="730" cy="316.5" r="5" fill="#b81c22" stroke="#8a0e12" stroke-width="0.6"/><path d="M728 314.5 l4 4 M732 314.5 l-4 4" stroke="#fff" stroke-width="1.7"/><rect x="800.8" y="311.5" width="10" height="10" fill="#d8d8d8"/><rect x="805.8" y="315.5" width="12" height="12" fill="#ececec"/><path d="M804.8 321.0 h5 v-3 l4.5 4 l-4.5 4 v-3 h-5z" fill="#1a8ad8"/><rect x="882.0" y="311" width="1.2" height="16" rx="0.6" fill="#141414"/><rect x="899.4000000000001" y="310.5" width="3.6" height="4" fill="#2ab0d8" transform="rotate(0 901.2 318.7)"/><rect x="899.4000000000001" y="310.5" width="3.6" height="4" fill="#2ab0d8" transform="rotate(45 901.2 318.7)"/><rect x="899.4000000000001" y="310.5" width="3.6" height="4" fill="#2ab0d8" transform="rotate(90 901.2 318.7)"/><rect x="899.4000000000001" y="310.5" width="3.6" height="4" fill="#2ab0d8" transform="rotate(135 901.2 318.7)"/><rect x="899.4000000000001" y="310.5" width="3.6" height="4" fill="#2ab0d8" transform="rotate(180 901.2 318.7)"/><rect x="899.4000000000001" y="310.5" width="3.6" height="4" fill="#2ab0d8" transform="rotate(225 901.2 318.7)"/><rect x="899.4000000000001" y="310.5" width="3.6" height="4" fill="#2ab0d8" transform="rotate(270 901.2 318.7)"/><rect x="899.4000000000001" y="310.5" width="3.6" height="4" fill="#2ab0d8" transform="rotate(315 901.2 318.7)"/><circle cx="901.2" cy="318.7" r="5.6" fill="#2ab0d8"/><circle cx="901.2" cy="318.7" r="2.4" fill="#4e5b6a"/><polygon points="950.15,317.5 955.65,317.5 952.9,320.7" fill="#dfe3e8"/><path d="M1100.20 322.34 A5.35 5.35 0 1 1 1100.32 315.61" fill="none" stroke="#c5cad3" stroke-width="4"/><polygon points="1096.1000000000001,318.2 1103.5,318.2 1103.5,311.0" fill="#c5cad3"/><rect x="616" y="337" width="12" height="12" rx="2" fill="#d5dade" stroke="#1c242c" stroke-width="0.6"/><rect x="638.6" y="341.5" width="14.5" height="8" fill="#ececec"/><polygon points="645.8000000000001,335.0 653.1,342.0 638.6,342.0" fill="#ececec"/><path d="M637.3000000000001 342.8 L645.8000000000001 334.5 L654.3000000000001 342.8" fill="none" stroke="#d8141c" stroke-width="1.8"/><rect x="643.6" y="342.7" width="4.2" height="6" fill="#b07030"/><polygon points="676.9,366.7 687.6,366.7 682.25,361.5" fill="#8f97a2"/><rect x="619.4" y="379.7" width="12" height="12" rx="2" fill="#d5dade" stroke="#1c242c" stroke-width="0.6"/><path d="M651.3 378.4 h9 l4 4 v11.3 h-13z" fill="#ececec"/><path d="M660.3 378.4 v4 h4z" fill="#c4c4c4"/><rect x="649" y="381.4" width="10" height="8.4" fill="#243e6a"/><path d="M650.5 382.9 l2 1.5 l-2 1.5 M653.5 386.4 h3" stroke="#c8d0e0" stroke-width="0.7" fill="none"/><rect x="619.4" y="405.06" width="12" height="12" rx="2" fill="#d5dade" stroke="#1c242c" stroke-width="0.6"/><path d="M651.3 403.76 h9 l4 4 v11.3 h-13z" fill="#ececec"/><path d="M660.3 403.76 v4 h4z" fill="#c4c4c4"/><circle cx="652" cy="410.26" r="4.5" fill="#e6e8ea" stroke="#b0b4b8" stroke-width="0.8"/><path d="M652 407.76 v2.8 h2" stroke="#555" stroke-width="0.8" fill="none"/><rect x="619.4" y="430.42" width="12" height="12" rx="2" fill="#d5dade" stroke="#1c242c" stroke-width="0.6"/><path d="M651.3 429.12 h9 l4 4 v11.3 h-13z" fill="#ececec"/><path d="M660.3 429.12 v4 h4z" fill="#c4c4c4"/><rect x="649" y="432.12" width="10" height="8.4" fill="#243e6a"/><path d="M650.5 433.62 l2 1.5 l-2 1.5 M653.5 437.12 h3" stroke="#c8d0e0" stroke-width="0.7" fill="none"/><rect x="619.4" y="455.78" width="12" height="12" rx="2" fill="#d5dade" stroke="#1c242c" stroke-width="0.6"/><path d="M657 457.67999999999995 q0 -2 2 -2 h5 q2 0 2 2 v12 h-9z" fill="#dcdcd0"/><rect x="649" y="458.47999999999996" width="15.5" height="11.5" rx="0.8" fill="url(#fg)"/><rect x="619.4" y="481.14" width="12" height="12" rx="2" fill="#d5dade" stroke="#1c242c" stroke-width="0.6"/><path d="M657 483.03999999999996 q0 -2 2 -2 h5 q2 0 2 2 v12 h-9z" fill="#dcdcd0"/><rect x="649" y="483.84" width="15.5" height="11.5" rx="0.8" fill="url(#fg)"/><rect x="619.4" y="506.49999999999994" width="12" height="12" rx="2" fill="#d5dade" stroke="#1c242c" stroke-width="0.6"/><path d="M657 508.3999999999999 q0 -2 2 -2 h5 q2 0 2 2 v12 h-9z" fill="#dcdcd0"/><rect x="649" y="509.19999999999993" width="15.5" height="11.5" rx="0.8" fill="url(#fg)"/><rect x="619.4" y="531.8599999999999" width="12" height="12" rx="2" fill="#d5dade" stroke="#1c242c" stroke-width="0.6"/><path d="M657 533.76 q0 -2 2 -2 h5 q2 0 2 2 v12 h-9z" fill="#dcdcd0"/><rect x="649" y="534.56" width="15.5" height="11.5" rx="0.8" fill="url(#fg)"/><rect x="619.4" y="557.2199999999999" width="12" height="12" rx="2" fill="#d5dade" stroke="#1c242c" stroke-width="0.6"/><path d="M657 559.12 q0 -2 2 -2 h5 q2 0 2 2 v12 h-9z" fill="#dcdcd0"/><rect x="649" y="559.92" width="15.5" height="11.5" rx="0.8" fill="url(#fg)"/><rect x="619.4" y="582.5799999999999" width="12" height="12" rx="2" fill="#d5dade" stroke="#1c242c" stroke-width="0.6"/><path d="M657 584.48 q0 -2 2 -2 h5 q2 0 2 2 v12 h-9z" fill="#dcdcd0"/><rect x="649" y="585.28" width="15.5" height="11.5" rx="0.8" fill="url(#fg)"/><rect x="619.4" y="607.9399999999999" width="12" height="12" rx="2" fill="#d5dade" stroke="#1c242c" stroke-width="0.6"/><path d="M657 609.84 q0 -2 2 -2 h5 q2 0 2 2 v12 h-9z" fill="#dcdcd0"/><rect x="649" y="610.64" width="15.5" height="11.5" rx="0.8" fill="url(#fg)"/><circle cx="656.8" cy="615.84" r="2" fill="#3a3a2a"/><rect x="654.5" y="617.84" width="4.6" height="2" fill="#3a3a2a"/><rect x="619.4" y="633.3" width="12" height="12" rx="2" fill="#d5dade" stroke="#1c242c" stroke-width="0.6"/><path d="M657 635.2 q0 -2 2 -2 h5 q2 0 2 2 v12 h-9z" fill="#dcdcd0"/><rect x="649" y="636.0" width="15.5" height="11.5" rx="0.8" fill="url(#fg)"/></svg>
</body></html>
